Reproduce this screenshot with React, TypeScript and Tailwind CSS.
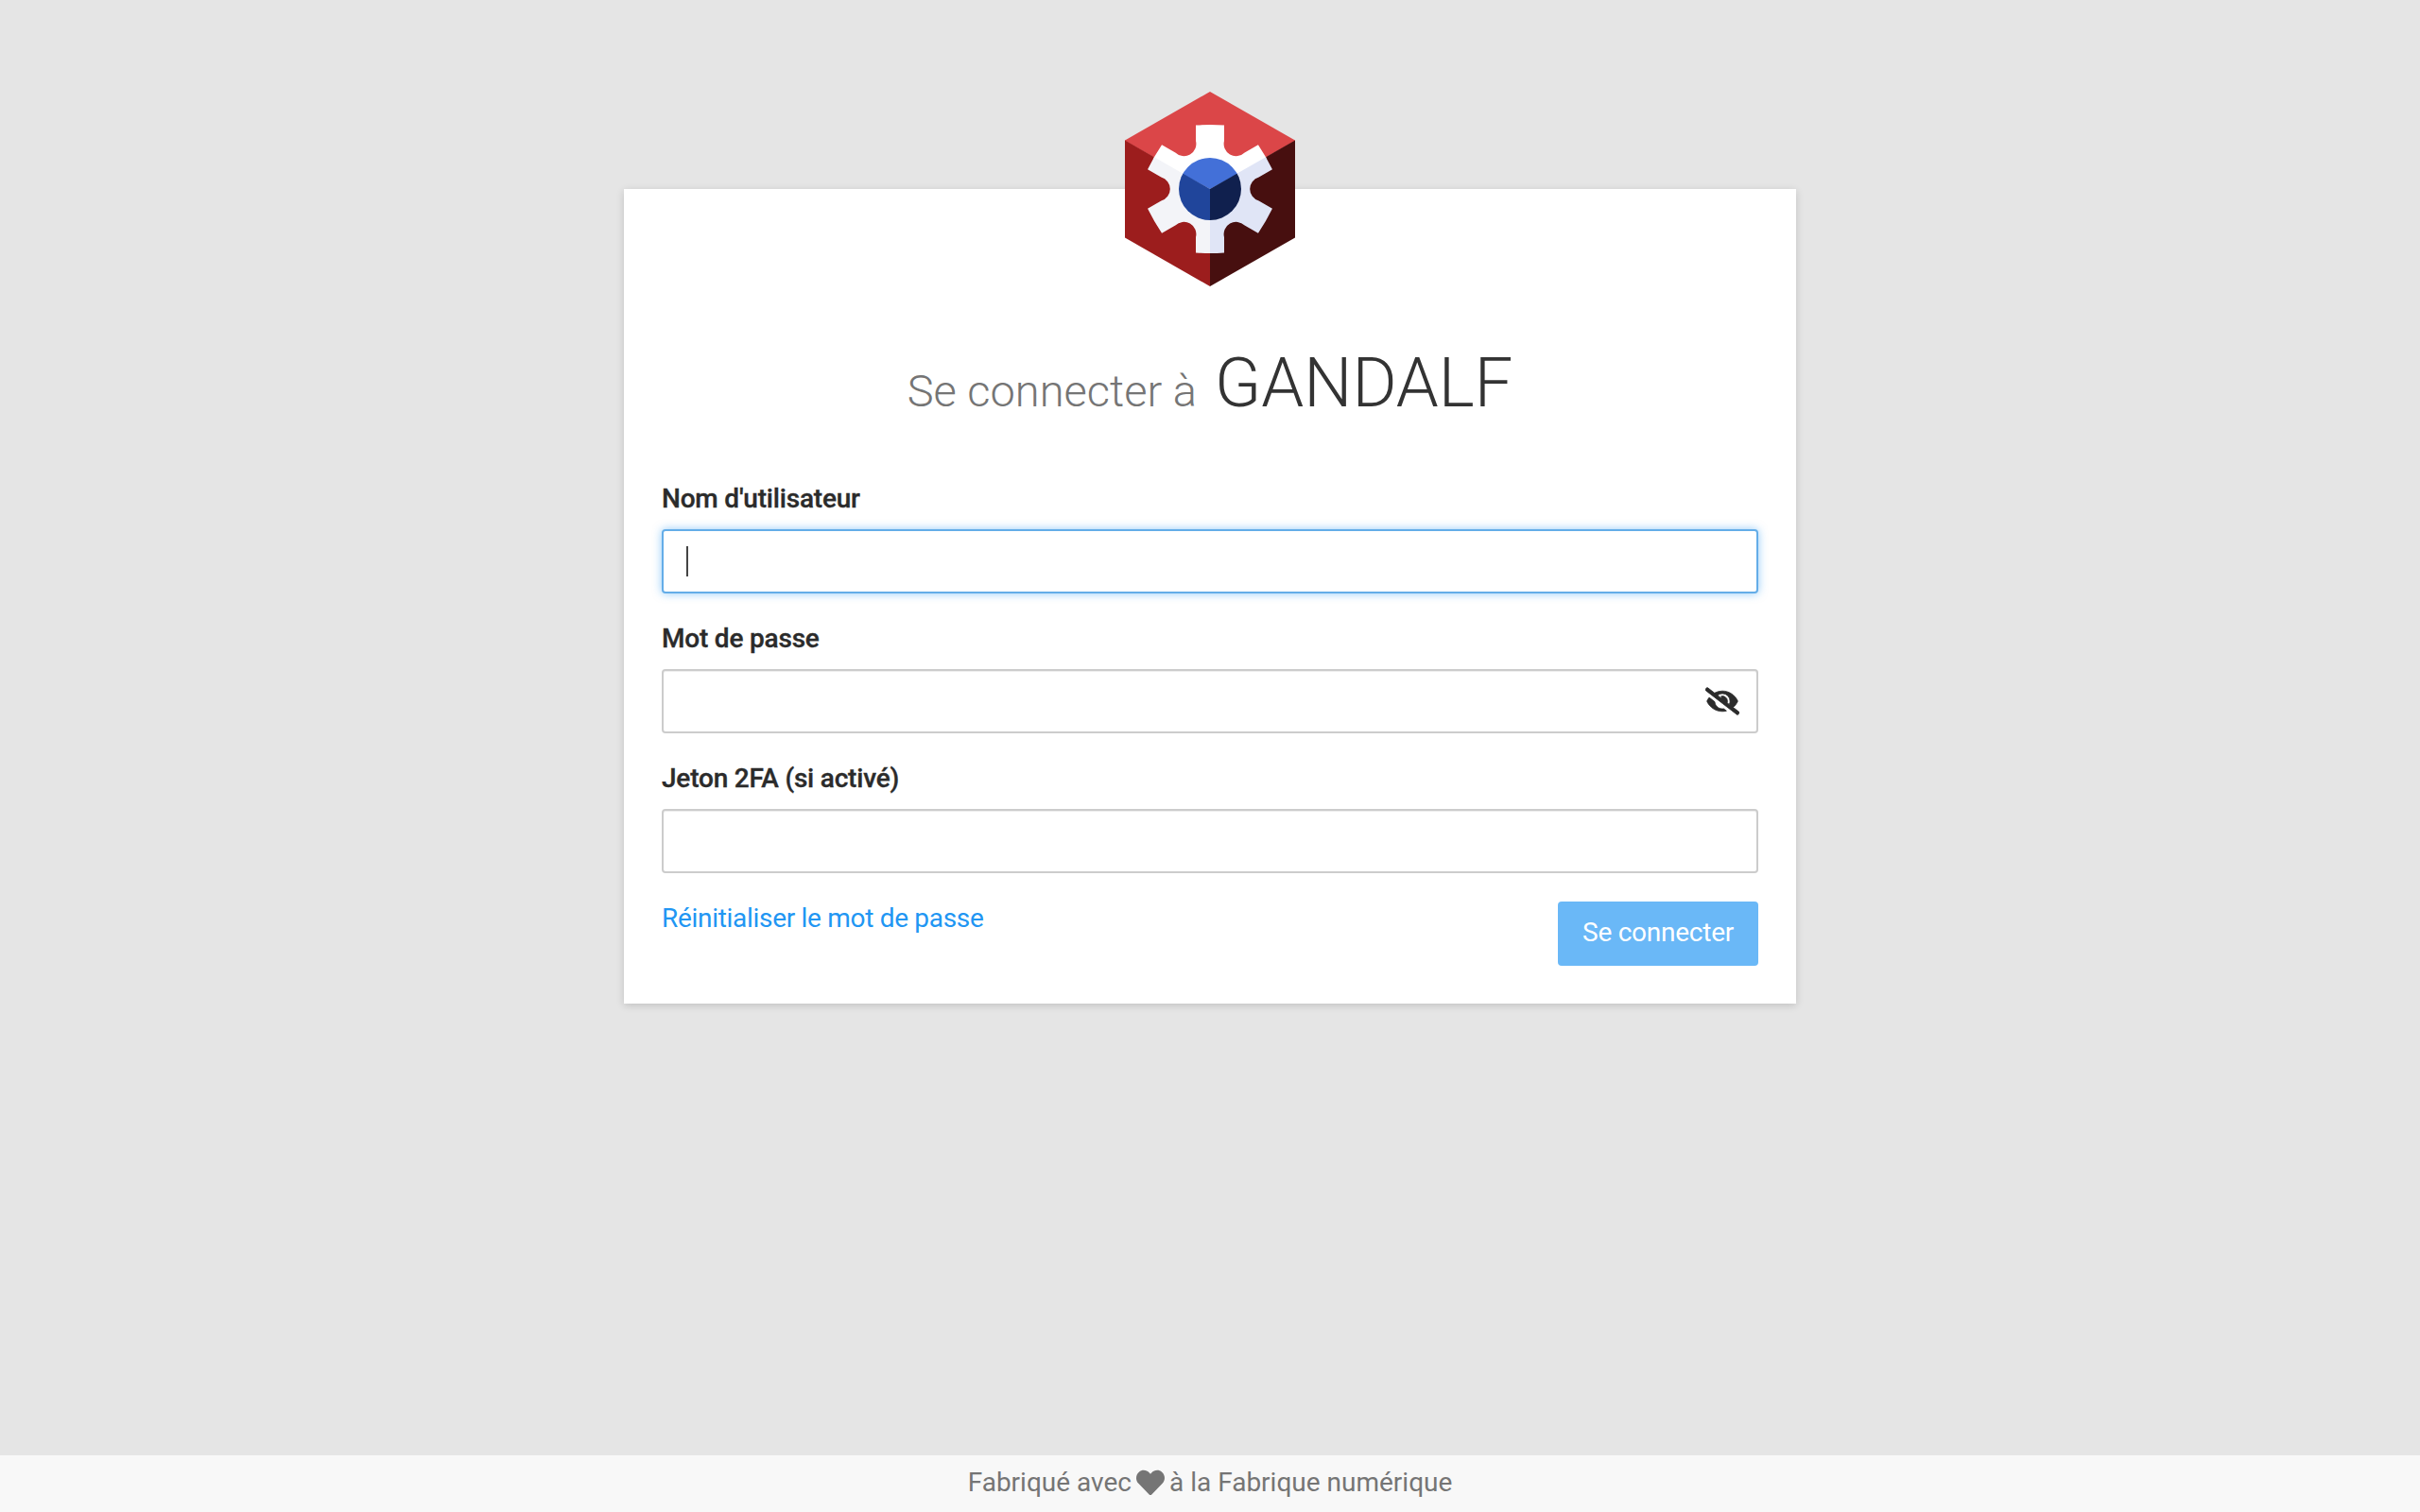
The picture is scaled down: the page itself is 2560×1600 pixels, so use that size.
import React from "react";
import { FaEyeSlash, FaHeart } from "react-icons/fa";

const CX = 90;
const CY = 103;

function gearPath(): string {
  const rot = (x: number, y: number, deg: number) => {
    const a = (deg * Math.PI) / 180;
    return [
      (CX + x * Math.cos(a) - y * Math.sin(a)).toFixed(2),
      (CY + x * Math.sin(a) + y * Math.cos(a)).toFixed(2),
    ].join(" ");
  };
  let d = "";
  for (let i = 0; i < 6; i++) {
    const deg = i * 60;
    d += `${i === 0 ? "M" : "L"}${rot(-15, -51, deg)} `;
    d += `L${rot(-15, -67.5, deg)} Q${rot(0, -68.5, deg)} ${rot(15, -67.5, deg)} L${rot(15, -51, deg)} `;
    d += `A13 13 0 0 0 ${rot(-15, -51, deg + 60)} `;
  }
  return d + "Z";
}

function Logo() {
  const gear = gearPath();
  const top = "90,0 180,51.5 180,52 90,103 0,52 0,51.5";
  const left = "0,51.5 90,103 90,206 0,154.5";
  const right = "180,51.5 90,103 90,206 180,154.5";
  return (
    <svg width="180" height="206" viewBox="0 0 180 206" className="block">
      <defs>
        <clipPath id="t"><polygon points="90,-20 200,43 90,103 -20,43" /></clipPath>
        <clipPath id="l"><polygon points="-20,40 90,103 90,230 -20,230" /></clipPath>
        <clipPath id="r"><polygon points="200,40 90,103 90,230 200,230" /></clipPath>
      </defs>
      <polygon points={top} fill="#db4648" />
      <polygon points={left} fill="#9c1d1d" />
      <polygon points={right} fill="#470f0f" />
      <path d={gear} fill="#ffffff" clipPath="url(#t)" />
      <path d={gear} fill="#f3f4f8" clipPath="url(#l)" />
      <path d={gear} fill="#e0e5f6" clipPath="url(#r)" />
      <circle cx={CX} cy={CY} r="33" fill="#4370d8" clipPath="url(#t)" />
      <circle cx={CX} cy={CY} r="33" fill="#20459b" clipPath="url(#l)" />
      <circle cx={CX} cy={CY} r="33" fill="#10204e" clipPath="url(#r)" />
    </svg>
  );
}

const inputCls =
  "block w-full h-[68px] rounded-[4px] border-2 border-[#cccccc] bg-white px-6 text-[28px] outline-none shadow-[inset_0_1px_1px_rgba(0,0,0,0.075)]";

function Label({ children }: { children: React.ReactNode }) {
  return <label className="block text-[28px] leading-[40px] font-medium tracking-[-0.2px] text-[#2b2b2b] [-webkit-text-stroke:0.35px_#2b2b2b] mb-[12px]">{children}</label>;
}

export default function App() {
  return (
    <div className="min-h-screen flex flex-col bg-[#e5e5e5] font-['Roboto',sans-serif]">
      <main className="flex-1 pt-[200px]">
        <div className="relative mx-auto w-[1240px] h-[862px] bg-white px-10 pt-[156px] shadow-[0_2px_8px_rgba(0,0,0,0.16)]">
          <div className="absolute left-[530px] top-[-103px]">
            <Logo />
          </div>
          <h1 className="flex items-baseline justify-center gap-[19px] h-[100px] leading-[100px] font-light">
            <span className="text-[47px] text-[#757575]">Se connecter à</span>
            <span className="text-[72px] text-[#333333]">GANDALF</span>
          </h1>
          <div className="mt-[52px]">
            <Label>Nom d'utilisateur</Label>
            <div className="relative">
              <input className="block w-full h-[68px] rounded-[4px] border-2 border-[#64ade8] bg-white px-6 text-[28px] outline-none shadow-[0_0_10px_rgba(33,150,243,0.5)]" aria-label="Nom d'utilisateur" />
              <span className="absolute left-[26px] top-[18px] h-[32px] w-[2px] bg-[#444444]" />
            </div>
          </div>
          <div className="mt-[28px]">
            <Label>Mot de passe</Label>
            <div className="relative">
              <input type="password" className={inputCls} aria-label="Mot de passe" />
              <FaEyeSlash className="absolute right-[20px] top-[16px] text-[#2b2b2b] stroke-[14px]" size={36} />
            </div>
          </div>
          <div className="mt-[28px]">
            <Label>Jeton 2FA (si activé)</Label>
            <input className={inputCls} aria-label="Jeton 2FA" />
          </div>
          <div className="mt-[30px] flex items-start justify-between">
            <a href="#" className="-mt-[2px] text-[28px] leading-[40px] tracking-[-0.3px] text-[#2196f3]">Réinitialiser le mot de passe</a>
            <button className="w-[212px] h-[68px] pb-[2px] rounded-[4px] bg-[#6ab8f7] text-[28px] tracking-[-0.25px] text-white">Se connecter</button>
          </div>
        </div>
      </main>
      <footer className="h-[60px] bg-[#f8f8f8] flex items-center justify-center gap-[5px] text-[28px] leading-[40px] text-[#757575]">
        <span className="-mt-[2px]">Fabriqué avec</span>
        <FaHeart size={30} className="-mt-[2px]" />
        <span className="-mt-[2px]">à la Fabrique numérique</span>
      </footer>
    </div>
  );
}
